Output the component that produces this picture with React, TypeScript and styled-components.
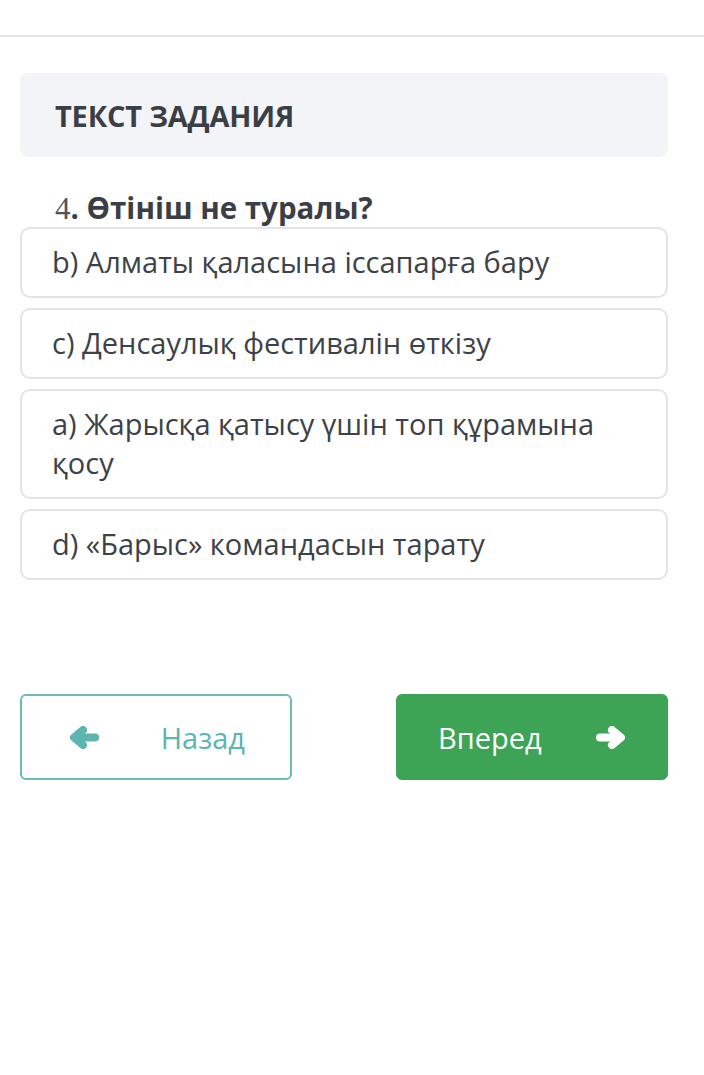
import React from 'react';
import styled, { createGlobalStyle } from 'styled-components';

const GlobalStyle = createGlobalStyle`
  html, body {
    margin: 0;
    padding: 0;
    background: #ffffff;
    font-family: 'Open Sans', 'Noto Sans', sans-serif;
    color: #3b4046;
  }
`;

const Page = styled.div`
  width: 704px;
  min-height: 1075px;
  background: #ffffff;
`;

const TopBar = styled.div`
  height: 35px;
  border-bottom: 2px solid #e3e3e3;
`;

const Content = styled.main`
  padding: 36px 36px 0 20px;
  display: flex;
  flex-direction: column;
`;

const TaskHeader = styled.div`
  height: 84px;
  background: #f3f4f7;
  border-radius: 8px;
  display: flex;
  align-items: center;
  padding: 0 35px;
`;

const TaskTitle = styled.h2`
  margin: 0;
  font-size: 29px;
  font-weight: 700;
  letter-spacing: -0.2px;
  color: #3b3f45;
`;

const Question = styled.div`
  margin: 33px 0 0 35px;
  font-size: 29.5px;
  font-weight: 700;
  line-height: 36px;
  color: #3b3f45;
`;

const Num = styled.span`
  font-family: 'Liberation Serif', 'DejaVu Serif', serif;
  font-weight: 400;
  font-size: 31px;
  color: #50545a;
`;

const Options = styled.div`
  display: flex;
  flex-direction: column;
  gap: 10px;
`;

const Option = styled.div`
  border: 2px solid #e4e4e4;
  border-radius: 10px;
  padding: 13px 30px 15px 30px;
  font-size: 29px;
  line-height: 39px;
  color: #3d4248;
`;

const Nav = styled.div`
  margin-top: 114px;
  display: flex;
  justify-content: space-between;
`;

const NavButton = styled.button<{ $primary?: boolean }>`
  width: 272px;
  height: 86px;
  box-sizing: border-box;
  border-radius: 6px;
  border: 2px solid ${({ $primary }) => ($primary ? '#3ca454' : '#6abcb7')};
  background: ${({ $primary }) => ($primary ? '#3ca454' : '#ffffff')};
  color: ${({ $primary }) => ($primary ? '#ffffff' : '#5cb5b0')};
  font-family: 'Open Sans', 'Noto Sans', sans-serif;
  font-size: 29px;
  display: flex;
  align-items: center;
  padding: 0 ${({ $primary }) => ($primary ? '41px 0 40px' : '45px 0 48px')};
  justify-content: space-between;
`;

const ArrowSvg = styled.svg<{ $left?: boolean }>`
  flex: none;
  transform: ${({ $left }) => ($left ? 'scaleX(-1)' : 'none')};
`;

const Arrow = ({ left }: { left?: boolean }) => (
  <ArrowSvg
    $left={left}
    width="29"
    height="23"
    viewBox="0 0 29 23"
    fill="none"
    stroke="currentColor"
    strokeWidth="8"
    strokeLinecap="round"
    strokeLinejoin="round"
  >
    <path d="M4 11.5H22" />
    <path d="M16 4L25 11.5L16 19" />
  </ArrowSvg>
);

export default function App() {
  const options = [
    'b) Алматы қаласына іссапарға бару',
    'c) Денсаулық фестивалін өткізу',
    'a) Жарысқа қатысу үшін топ құрамына қосу',
    'd) «Барыс» командасын тарату',
  ];
  return (
    <Page>
      <GlobalStyle />
      <TopBar />
      <Content>
        <TaskHeader>
          <TaskTitle>ТЕКСТ ЗАДАНИЯ</TaskTitle>
        </TaskHeader>
        <Question>
          <Num>4</Num>. Өтініш не туралы?
        </Question>
        <Options>
          {options.map((o) => (
            <Option key={o}>{o}</Option>
          ))}
        </Options>
        <Nav>
          <NavButton>
            <Arrow left />
            <span>Назад</span>
          </NavButton>
          <NavButton $primary>
            <span>Вперед</span>
            <Arrow />
          </NavButton>
        </Nav>
      </Content>
    </Page>
  );
}
